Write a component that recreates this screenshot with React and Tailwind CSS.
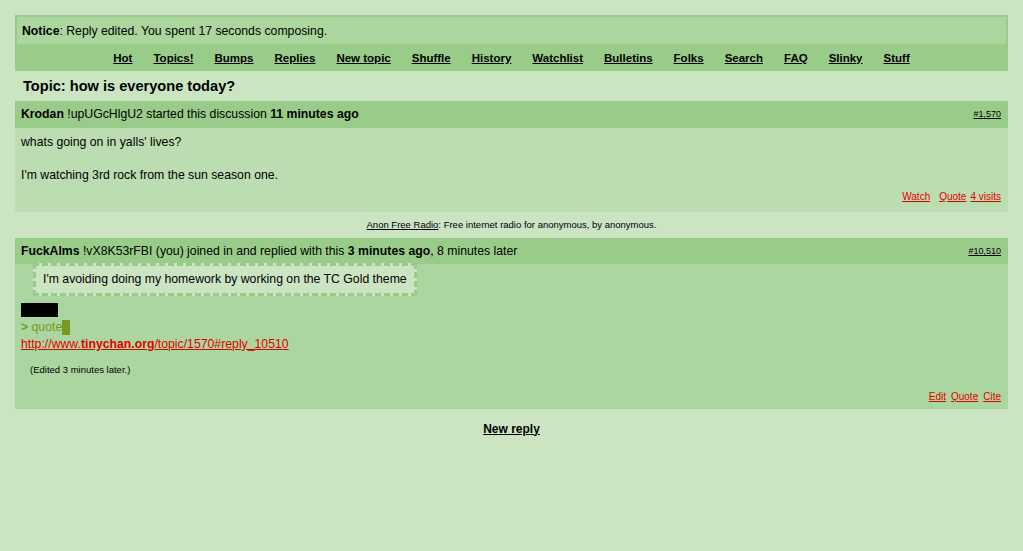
export default function App() {
  const nav = [
    "Hot",
    "Topics!",
    "Bumps",
    "Replies",
    "New topic",
    "Shuffle",
    "History",
    "Watchlist",
    "Bulletins",
    "Folks",
    "Search",
    "FAQ",
    "Slinky",
    "Stuff",
  ];

  return (
    <div className="min-h-[551px] bg-[#cbe5c2] p-[15px] font-['Liberation_Sans',Arial,sans-serif] text-[12.25px] leading-[16.5px] text-black">
      {/* Notice */}
      <div className="h-[29px] border-2 border-b-0 border-[#99cc88] bg-[#abd69e] pl-[5px] leading-[28px]">
        <b>Notice</b>: Reply edited. You spent 17 seconds composing.
      </div>

      {/* Navigation */}
      <div className="flex h-[27px] items-center justify-center gap-[21px] bg-[#99cc88] pt-[1px] text-[11.5px] font-bold">
        {nav.map((n) => (
          <a key={n} href="#" className="underline">
            {n}
          </a>
        ))}
      </div>

      <h1 className="pl-[8px] text-[14.6px] font-bold leading-[30px]">
        Topic: how is everyone today?
      </h1>

      {/* Opening post */}
      <div>
        <div className="flex h-[27px] items-center justify-between bg-[#99cc88] pl-[6px] pr-[7px]">
          <span>
            <b>Krodan</b> !upUGcHlgU2 started this discussion <b>11 minutes ago</b>
          </span>
          <a href="#" className="text-[9px] underline">
            #1,570
          </a>
        </div>
        <div className="bg-[#bcdcb2] px-[6px] pt-[6px] pb-[8px]">
          <p>whats going on in yalls' lives?</p>
          <p>&nbsp;</p>
          <p>I'm watching 3rd rock from the sun season one.</p>
          <div className="mt-[6.5px] flex justify-end gap-[4px] pr-[1px] text-[10px] leading-[14px] text-[#e00000]">
            <a href="#" className="mr-[5px] underline">Watch</a>
            <a href="#" className="underline">Quote</a>
            <a href="#" className="underline">4 visits</a>
          </div>
        </div>
      </div>

      <div className="text-center text-[9.5px] leading-[26px]">
        <a href="#" className="underline">Anon Free Radio</a>: Free internet radio for anonymous, by anonymous.
      </div>

      {/* Reply */}
      <div>
        <div className="flex h-[26px] items-center justify-between bg-[#99cc88] pl-[6px] pr-[7px]">
          <span>
            <b>FuckAlms</b> !vX8K53rFBI (you) joined in and replied with this{" "}
            <b>3 minutes ago</b>, 8 minutes later
          </span>
          <a href="#" className="text-[9px] underline">
            #10,510
          </a>
        </div>
        <div className="bg-[#acd69f] px-[6px] pb-[5px]">
          <div className="-mt-[1px] ml-[12px] inline-block border-[3px] border-dashed border-[#99cc88] bg-[#cbe5c2] px-[7px] py-[5.25px]">
            I'm avoiding doing my homework by working on the TC Gold theme
          </div>
          <div className="mt-[6px] h-[16.5px]">
            <span className="relative top-[1px] inline-block h-[14px] bg-black px-[1px] align-top text-[12px] leading-[14px] text-black">
              spoiler
            </span>
          </div>
          <div className="h-[16.5px] text-[#789922]">
            <b>&gt;</b> quote
            <span className="relative top-[1px] inline-block h-[15px] w-[8px] bg-[#789922] align-top"></span>
          </div>
          <div className="mt-[1px] h-[16.5px]">
            <a href="#" className="text-[#e00000] underline">
              http://www.<b>tinychan.org</b>/topic/1570#reply_10510
            </a>
          </div>
          <div className="mt-[10px] pl-[9px] text-[9.5px] leading-[14px]">
            (Edited 3 minutes later.)
          </div>
          <div className="mt-[13px] flex justify-end gap-[5px] pr-[1px] text-[10px] leading-[14px] text-[#e00000]">
            <a href="#" className="underline">Edit</a>
            <a href="#" className="underline">Quote</a>
            <a href="#" className="underline">Cite</a>
          </div>
        </div>
      </div>

      <div className="mt-[12px] text-center text-[12px] font-bold">
        <a href="#" className="underline">New reply</a>
      </div>
    </div>
  );
}
